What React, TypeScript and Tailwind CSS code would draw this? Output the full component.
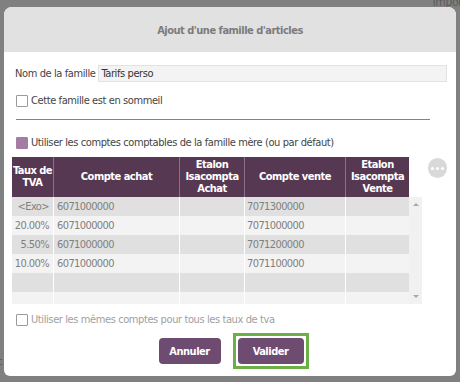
import React from 'react';

interface TvaRow {
  taux: string;
  achat: string;
  vente: string;
}

const ROWS: TvaRow[] = [
  { taux: '<Exo>', achat: '6071000000', vente: '7071300000' },
  { taux: '20.00%', achat: '6071000000', vente: '7071000000' },
  { taux: '5.50%', achat: '6071000000', vente: '7071200000' },
  { taux: '10.00%', achat: '6071000000', vente: '7071100000' },
  { taux: '', achat: '', vente: '' },
  { taux: '', achat: '', vente: '' }
];

const FONT = "font-['DejaVu_Sans_Condensed','DejaVu_Sans',sans-serif]";

const Checkbox: React.FC<{ checked?: boolean; label: string; muted?: boolean }> = ({ checked, label, muted }) => (
  <label className={`flex h-[13px] items-center gap-[3px] ${muted ? 'text-[#a0a0a0]' : 'text-[#444]'}`}>
    <span
      className={`h-[12px] w-[12px] shrink-0 rounded-[1px] border ${
        checked ? 'border-[#a47ca4] bg-[#a47ca4]' : 'border-[#9a9a9a] bg-white'
      }`}
    />
    <span>{label}</span>
  </label>
);

const App: React.FC = () => {
  return (
    <div
      className={`relative h-[382px] w-[460px] overflow-hidden bg-[#808080] pl-[4px] pt-[7px] text-[11px] leading-[13px] tracking-[-0.4px] ${FONT}`}
    >
      {/* page behind the overlay */}
      <span className="absolute right-[-6px] top-[-4px] text-[12px] text-[#5c5c5c]">Import</span>
      <span className="absolute left-[-3px] top-[355px] text-[11px] text-[#5c5c5c]">c</span>

      <div className="relative h-[369px] w-[452px] overflow-hidden rounded-t-[8px] rounded-b-[6px] bg-white">
        <div className="flex h-[45px] items-center justify-center bg-[#e1e1e1] pt-[1px]">
          <h1 className="text-[11px] font-bold tracking-[-0.5px] text-[#7c7c7c]">Ajout d'une famille d'articles</h1>
        </div>

        <div className="pl-[11px] pr-[9px] pt-[13px]">
          <div className="flex items-center gap-[3px] text-[#444]">
            <span>Nom de la famille</span>
            <div className="flex h-[17px] flex-1 items-center border border-[#e2e2e2] bg-[#f3f3f3] px-[2px] text-[#333]">
              Tarifs perso
            </div>
          </div>

          <div className="mt-[12px] pl-[1px]">
            <Checkbox label="Cette famille est en sommeil" />
          </div>

          <div className="ml-[1px] mr-[17px] mt-[12px] h-px bg-[#8c7c8c]" />

          <div className="mt-[16px] pl-[1px]">
            <Checkbox checked label="Utiliser les comptes comptables de la famille mère (ou par défaut)" />
          </div>

          <div className="mt-[8px] flex items-start">
            <div className="ml-[-3px] flex w-[410px] flex-col">
              <div className="flex h-[40px] w-[397px] bg-[#573853] font-bold leading-[12px] tracking-[-0.5px] text-white">
                <div className="flex w-[42px] items-center justify-center border-r border-[#8c7088] text-center">Taux de<br />TVA</div>
                <div className="flex w-[126px] items-center justify-center border-r border-[#8c7088]">Compte achat</div>
                <div className="flex w-[65px] items-center justify-center border-r border-[#8c7088] text-center">Etalon<br />Isacompta<br />Achat</div>
                <div className="flex w-[101px] items-center justify-center border-r border-[#8c7088]">Compte vente</div>
                <div className="flex w-[63px] items-center justify-center text-center">Etalon<br />Isacompta<br />Vente</div>
              </div>
              <div className="flex h-[107px] overflow-hidden">
                <div className="flex w-[397px] flex-col tracking-[-0.6px] text-[#808080]">
                  {ROWS.map((row, i) => (
                    <div
                      key={i}
                      className={`flex h-[19px] shrink-0 items-center ${i % 2 === 0 ? 'bg-[#e0e0e0]' : 'bg-[#f3f3f3]'}`}
                    >
                      <div className="flex h-full w-[42px] items-center justify-end border-r border-white pr-[4px]">{row.taux}</div>
                      <div className="flex h-full w-[126px] items-center border-r border-white pl-[3px]">{row.achat}</div>
                      <div className="h-full w-[65px] border-r border-white" />
                      <div className="flex h-full w-[101px] items-center border-r border-white pl-[2px]">{row.vente}</div>
                      <div className="h-full w-[63px]" />
                    </div>
                  ))}
                </div>
                <div className="flex w-[13px] flex-col items-center justify-between bg-[#f1f1f1] py-[6px]">
                  <span className="h-0 w-0 border-x-[3px] border-b-[3px] border-x-transparent border-b-[#a8a8a8]" />
                  <span className="h-0 w-0 border-x-[3px] border-t-[3px] border-x-transparent border-t-[#a8a8a8]" />
                </div>
              </div>
            </div>
            <button
              type="button"
              className="ml-[6px] mt-[1px] flex h-[20px] w-[20px] items-center justify-center gap-[2px] rounded-full bg-[#d9d9d9]"
            >
              <span className="h-[3px] w-[3px] rounded-full bg-white" />
              <span className="h-[3px] w-[3px] rounded-full bg-white" />
              <span className="h-[3px] w-[3px] rounded-full bg-white" />
            </button>
          </div>

          <div className="mt-[9px] pl-[1px]">
            <Checkbox muted label="Utiliser les mêmes comptes pour tous les taux de tva" />
          </div>

          <div className="mt-[7px] flex items-center justify-center gap-[12px] pl-[5px]">
            <button
              type="button"
              className="h-[26px] w-[62px] rounded-[4px] bg-[#6e4b71] font-bold tracking-[-0.5px] text-white"
            >
              Annuler
            </button>
            <div className="border-[3px] border-[#6caf45] p-[2px]">
              <button
                type="button"
                className="block h-[26px] w-[66px] rounded-[4px] bg-[#6e4b71] font-bold tracking-[-0.5px] text-white"
              >
                Valider
              </button>
            </div>
          </div>
        </div>
      </div>
    </div>
  );
};

export default App;
